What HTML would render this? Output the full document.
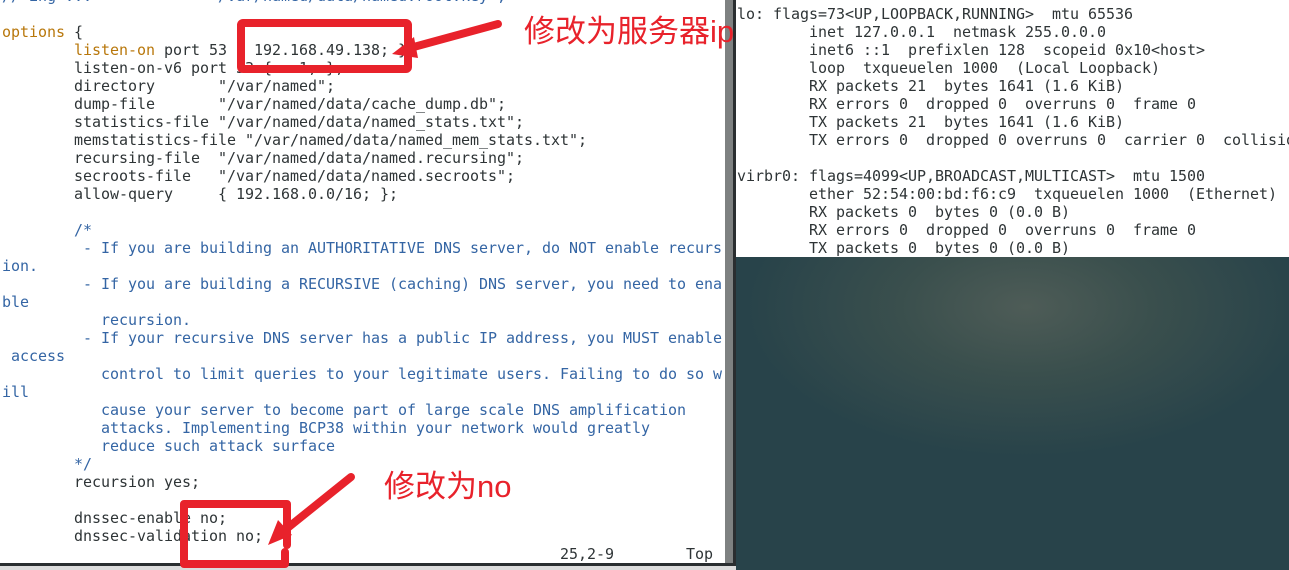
<!DOCTYPE html>
<html><head><meta charset="utf-8"><style>
html,body{margin:0;padding:0;width:1289px;height:570px;overflow:hidden;background:#e8e8e8;position:relative}
.mono{font-family:"DejaVu Sans Mono","Liberation Mono",monospace;font-size:15px;line-height:18px;white-space:pre;color:#2e3436;letter-spacing:-0.03px}
#ed{position:absolute;left:0;top:0;width:725px;height:563px;background:#fff;overflow:hidden}
#ed pre{margin:0;position:absolute;left:2px;top:-13px}
.k{color:#b8770b}.c{color:#3465a4}
#sb{position:absolute;left:725px;top:0;width:8px;height:563px;background:#7e8181}
#sbd{position:absolute;left:733px;top:0;width:3px;height:566px;background:#2a2e30}
#bot{position:absolute;left:0;top:563px;width:736px;height:3px;background:#2a2e30}
#bstrip{position:absolute;left:0;top:566px;width:1289px;height:4px;background:#dcdcdc}
#term{position:absolute;left:736px;top:0;width:553px;height:257px;background:#fff;overflow:hidden}
#term pre{margin:0;position:absolute;left:1px;top:5px}
#desk{position:absolute;left:736px;top:257px;width:553px;height:313px;background:radial-gradient(ellipse 280px 150px at 290px 50px,#4e5c57 0%,#3a4f4d 45%,#28434a 100%)}
.t{position:absolute;font-family:"Liberation Sans","Noto Sans CJK SC",sans-serif;color:#e8222b}
</style></head><body>
<div id="ed"><pre class="mono"><span class="c">// ing ...              /var/named/data/named.root.key";</span>

<span class="k">options</span> {
        <span class="k">listen-on</span> port 53 { 192.168.49.138; };
        listen-on-v6 port 53 { ::1; };
        directory       "/var/named";
        dump-file       "/var/named/data/cache_dump.db";
        statistics-file "/var/named/data/named_stats.txt";
        memstatistics-file "/var/named/data/named_mem_stats.txt";
        recursing-file  "/var/named/data/named.recursing";
        secroots-file   "/var/named/data/named.secroots";
        allow-query     { 192.168.0.0/16; };

<span class="c">        /*
         - If you are building an AUTHORITATIVE DNS server, do NOT enable recurs
ion.
         - If you are building a RECURSIVE (caching) DNS server, you need to ena
ble
           recursion.
         - If your recursive DNS server has a public IP address, you MUST enable
 access
           control to limit queries to your legitimate users. Failing to do so w
ill
           cause your server to become part of large scale DNS amplification
           attacks. Implementing BCP38 within your network would greatly
           reduce such attack surface
        */</span>
        recursion yes;

        dnssec-enable no;
        dnssec-validation no;
                                                              25,2-9        Top</pre></div>
<div id="sb"></div><div id="sbd"></div><div id="bot"></div><div id="bstrip"></div>
<div id="term"><pre class="mono">lo: flags=73&lt;UP,LOOPBACK,RUNNING&gt;  mtu 65536
        inet 127.0.0.1  netmask 255.0.0.0
        inet6 ::1  prefixlen 128  scopeid 0x10&lt;host&gt;
        loop  txqueuelen 1000  (Local Loopback)
        RX packets 21  bytes 1641 (1.6 KiB)
        RX errors 0  dropped 0  overruns 0  frame 0
        TX packets 21  bytes 1641 (1.6 KiB)
        TX errors 0  dropped 0 overruns 0  carrier 0  collisions 0

virbr0: flags=4099&lt;UP,BROADCAST,MULTICAST&gt;  mtu 1500
        ether 52:54:00:bd:f6:c9  txqueuelen 1000  (Ethernet)
        RX packets 0  bytes 0 (0.0 B)
        RX errors 0  dropped 0  overruns 0  frame 0
        TX packets 0  bytes 0 (0.0 B)</pre></div>
<div id="desk"></div>
<svg style="position:absolute;left:0;top:0" width="1289" height="570">
<g fill="none" stroke="#e8222b" stroke-width="8" stroke-linejoin="round" stroke-linecap="round">
<rect x="241" y="23" width="167" height="46" rx="2"/>
<path d="M498 24 L410 48"/>
<path d="M184 504 L184 564 L285 564 L285 552 M184 504 L287 504 L287 545"/>
<path d="M351 477 L285 530"/>
</g>
<g fill="#e8222b">
<path d="M392 54 L414 37 L418 58 Z"/>
<path d="M268 545 L278 520 L292 535 Z"/>
</g>
</svg>
<div class="t" style="left:524px;top:12px;font-size:31px;line-height:40px">修改为服务器ip</div>
<div class="t" style="left:384px;top:467px;font-size:31px;line-height:40px">修改为no</div>
</body></html>
